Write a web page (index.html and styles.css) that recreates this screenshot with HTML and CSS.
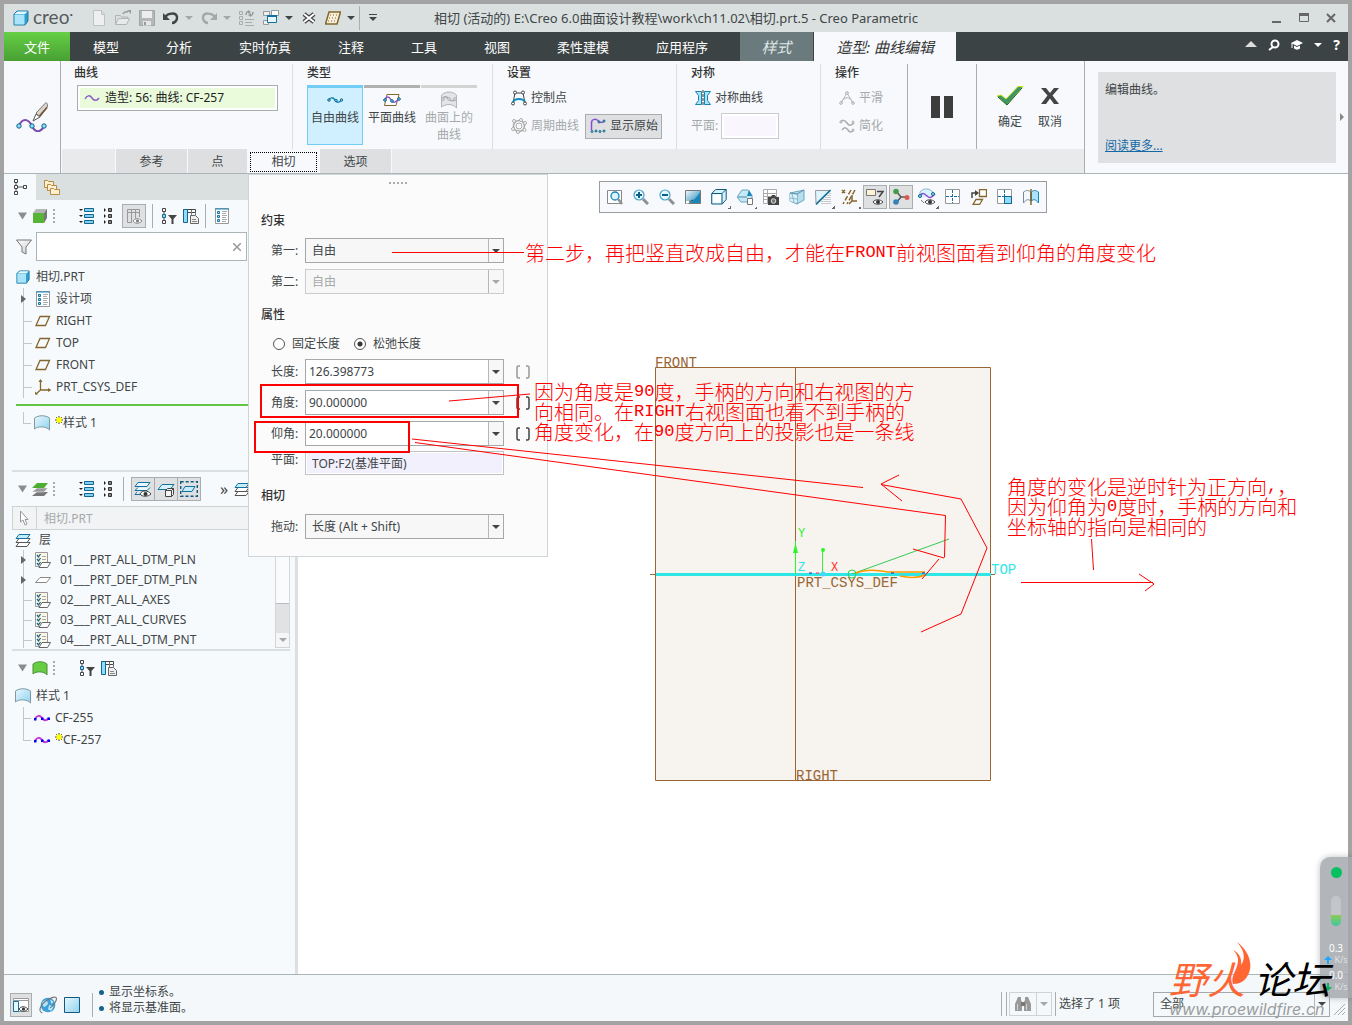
FILE: index.html
```html
<!DOCTYPE html>
<html lang="zh-CN">
<head>
    <meta charset="UTF-8">
    <meta name="viewport" content="width=device-width, initial-scale=1.0">
    <title>相切 (活动的) - Creo Parametric</title>
    <link rel="stylesheet" href="styles.css">
</head>
<body>
<!-- 图标库 -->
<svg class="defs" width="0" height="0">
    <defs>
        <linearGradient id="gBlue" x1="0" y1="0" x2="1" y2="1"><stop offset="0" stop-color="#e8f8fe"/><stop offset="1" stop-color="#8fd2f0"/></linearGradient>
        <linearGradient id="gGray" x1="0" y1="0" x2="1" y2="1"><stop offset="0" stop-color="#ffffff"/><stop offset="1" stop-color="#c9cccd"/></linearGradient>
        <linearGradient id="gDeep" x1="0" y1="0" x2="1" y2="1"><stop offset="0" stop-color="#f2fbff"/><stop offset="1" stop-color="#177fb2"/></linearGradient>
    </defs>
    <symbol id="cube" viewBox="0 0 16 16"><path d="M1 4l3-3h11v10l-3 4H1z" fill="#2a9fd0" stroke="#277a9b"/><path d="M1.500 4.500h10v10h-10z" fill="#a9e4fa"/><path d="M1.500 4l3-2.500h10L12 4z" fill="#e4f8ff"/></symbol>
    <symbol id="gcube" viewBox="0 0 16 16"><path d="M4 1h11l-3 4H1z" fill="#b5b5b5"/><path d="M12 5l3-4v9l-3 5z" fill="#777"/><path d="M1 5h11v10H1z" fill="#56b536"/></symbol>
    <symbol id="new" viewBox="0 0 16 16"><path d="M2.500 .5h8l3 4v11h-11z" fill="#eeefef" stroke="#bfc2c2"/><path d="M10.500 .5v4h3" fill="none" stroke="#bfc2c2"/></symbol>
    <symbol id="open" viewBox="0 0 16 16"><path d="M.5 14.500V5.500h5l1 1.500h6v2" fill="#dcdedd" stroke="#b0b4b4"/><path d="M.5 14.500l3-6h11l-3 6z" fill="#e8eaea" stroke="#b0b4b4"/><path d="M8 4c1-2.500 3-2.500 5-2" fill="none" stroke="#999" stroke-width="1.500"/><path d="M12 0h4v4z" fill="#999"/></symbol>
    <symbol id="save" viewBox="0 0 16 16"><path d="M.5 .5h15v15h-15z" fill="#b5b8b8" stroke="#a1a4a4"/><path d="M3 1h10v7H3z" fill="#eceeee"/><path d="M4 11h8v4.500H4z" fill="#e5e7e7"/><path d="M5 12h2v3H5z" fill="#999"/></symbol>
    <symbol id="undo" viewBox="0 0 16 16"><path d="M2 7c3-4 11-5 12 0 .5 4-3 6-5 6" fill="none" stroke="currentColor" stroke-width="2.500"/><path d="M0 3v7h7z" fill="currentColor"/></symbol>
    <symbol id="redo" viewBox="0 0 16 16"><path d="M14 7c-3-4-11-5-12 0-.5 4 3 6 5 6" fill="none" stroke="currentColor" stroke-width="2.500"/><path d="M16 3v7H9z" fill="currentColor"/></symbol>
    <symbol id="regen" viewBox="0 0 16 16"><path d="M.5 1.500h3v3h-3zM.5 6.500h3v3h-3zM.5 11.500h3v3h-3z" fill="none" stroke="#a9adad"/><path d="M6 9.500h9M6 12.500h7M6 15.500h9" stroke="#a9adad"/><path d="M7 5c0-3 2-4 3-3M14 2c0 3-2 4-3 3" fill="none" stroke="#999" stroke-width="1.500"/><path d="M9 0l3 2-3 2zM12 3l-3 2 3 2z" fill="#999"/></symbol>
    <symbol id="wins" viewBox="0 0 16 16"><path d="M.5 1.500h6v4h-6zM.5 10.500h5v4h-5z" fill="#eee" stroke="#999"/><path d="M8.500 .5h7v5h-7z" fill="#fff" stroke="#999"/><path d="M4.500 5.500h9v7h-9z" fill="#e6f6fd" stroke="#13719b"/><path d="M4 5h10v2H4z" fill="#13719b"/></symbol>
    <symbol id="closewin" viewBox="0 0 16 16"><path d="M3 4l10 8M13 4L3 12" stroke="#444" stroke-width="4.500"/><path d="M3 4l10 8M13 4L3 12" stroke="#fff" stroke-width="2"/></symbol>
    <symbol id="planeD" viewBox="0 0 16 16"><path d="M4 2h11.500L12 14H.5z" fill="#f8efda" stroke="#85662c" stroke-width="1.500"/><path d="M5 5h8M4 8h8M3 11h8" stroke="#85662c" stroke-dasharray="1 2"/></symbol>
    <symbol id="caret" viewBox="0 0 8 8"><path d="M0 2h8L4 6z" fill="currentColor"/></symbol>
    <symbol id="caretTop" viewBox="0 0 10 8"><path d="M1 0h8v1H1zM1 3h8L5 7z" fill="currentColor"/></symbol>
    <symbol id="tri" viewBox="0 0 10 8"><path d="M0 0h10L5 8z" fill="#8c8c8c"/></symbol>
    <symbol id="wave" viewBox="0 0 16 16"><path d="M1 9c2-4 5-4 7-1s5 3 7 0" fill="none" stroke="#8a5cc4" stroke-width="1.500"/></symbol>
    <symbol id="waveDots" viewBox="0 0 16 16"><path d="M1 9c2-4 5-4 7-1s4 3 7 0" fill="none" stroke="#1787b8" stroke-width="1.500"/><g fill="#8fe0ff" stroke="#0d5f86"><circle cx="2" cy="8" r="1.200"/><circle cx="9" cy="8.500" r="1.200"/><circle cx="14.500" cy="8" r="1.200"/></g></symbol>
    <symbol id="planeWave" viewBox="0 0 18 16"><path d="M4 2.500h12l-3 11H1.500z" fill="#fff" stroke="#85662c"/><path d="M1 9c2-5 5-5 7-1s5 2 8-1" fill="none" stroke="#8a4fd0" stroke-width="1.500"/><g fill="#8fe0ff" stroke="#0d5f86"><circle cx="2" cy="8" r="1.300"/><circle cx="9" cy="9" r="1.300"/><circle cx="16" cy="7" r="1.300"/></g></symbol>
    <symbol id="surfWave" viewBox="0 0 18 18"><path d="M1.500 4c4-4 11-4 15 0v13c-4-5-11-4-15-1z" fill="#e3e4e5" stroke="#b5b6b8"/><path d="M2 8c3-4 5-2 7 0s4 3 7 0" fill="none" stroke="#a7a8aa" stroke-width="1.500"/><g fill="#fff" stroke="#a7a8aa"><circle cx="3" cy="8" r="1.300"/><circle cx="9" cy="8" r="1.300"/><circle cx="15" cy="8" r="1.300"/></g></symbol>
    <symbol id="bigCurve" viewBox="0 0 32 32"><path d="M3 26c3-8 9-8 13 0s9 6 12 0" fill="none" stroke="#7a4bb0" stroke-width="2"/><g fill="#8fe0ff" stroke="#0d5f86"><circle cx="3" cy="26" r="2.200"/><circle cx="16" cy="26" r="2.200"/><circle cx="28" cy="26" r="2.200"/></g><path d="M17 21l3-7 4 3z" fill="#fff" stroke="#555"/><path d="M20 13L30 2.500c1.500 1 2 3 1 5L24 17z" fill="#d8d3cc" stroke="#777"/><path d="M23.500 16l7.500-8.500" stroke="#744a25" stroke-width="1.500"/></symbol>
    <symbol id="ctrl" viewBox="0 0 16 16"><path d="M2 13L4 3h8l2 10" fill="none" stroke="#444"/><path d="M2 12c2-4 10-4 12 0" fill="none" stroke="#1489bd" stroke-width="2"/><g fill="#fff" stroke="#444"><circle cx="4" cy="2.500" r="1.500"/><circle cx="12" cy="2.500" r="1.500"/><circle cx="2" cy="13.500" r="1.500"/><circle cx="14" cy="13.500" r="1.500"/></g></symbol>
    <symbol id="period" viewBox="0 0 16 16"><circle cx="8" cy="8" r="5.500" fill="none" stroke="#aaa" stroke-width="1.500"/><circle cx="8" cy="8" r="3" fill="none" stroke="#aaa"/><g fill="#fff" stroke="#aaa"><circle cx="3" cy="3" r="1.500"/><circle cx="10" cy="2" r="1.500"/><circle cx="14" cy="5" r="1.500"/><circle cx="13.500" cy="12" r="1.500"/><circle cx="7" cy="14" r="1.500"/><circle cx="2" cy="11" r="1.500"/></g></symbol>
    <symbol id="showOrig" viewBox="0 0 16 16"><path d="M1.500 12V5c0-5 5-4 7-2s4 2 6 0" fill="none" stroke="#8a4fd0" stroke-width="1.500"/><g fill="#8fe0ff" stroke="#0d5f86"><circle cx="2" cy="13.500" r="1"/><circle cx="6" cy="13" r="1"/><circle cx="10" cy="13.500" r="1"/><circle cx="14" cy="13" r="1"/><circle cx="9" cy="4" r="1"/><circle cx="14" cy="3" r="1"/></g></symbol>
    <symbol id="sym" viewBox="0 0 16 16"><path d="M.5 1.500h6v13h-6l3-4v-5zM15.500 1.500h-6v13h6l-3-4v-5z" fill="#a9e4fa" stroke="#1c83b0"/><path d="M8 0v16" stroke="#333" stroke-dasharray="3 1"/></symbol>
    <symbol id="smooth" viewBox="0 0 16 16"><path d="M2 13L8 3l6 10M2 13c3-7 9-7 12 0" fill="none" stroke="#b5b5b5"/><g fill="#fff" stroke="#aaa"><circle cx="8" cy="3" r="1.300"/><circle cx="2" cy="13" r="1.300"/><circle cx="14" cy="13" r="1.300"/></g></symbol>
    <symbol id="simp" viewBox="0 0 16 16"><path d="M1 5c2-4 5-3 7 0s4 3 7 0M3 12c2-3 4-3 6 0s4 2 6 0" fill="none" stroke="#aaa" stroke-width="1.500"/><g fill="#fff" stroke="#aaa"><circle cx="2" cy="4" r="1"/><circle cx="14" cy="4" r="1"/><circle cx="14" cy="12" r="1"/></g></symbol>
    <symbol id="ok" viewBox="0 0 28 20"><path d="M1 10l4-1 5 4L22 .5h5L11 19z" fill="#3e9566" stroke="#c6e514"/><path d="M2 11l9 8L26 2" fill="none" stroke="#21603a"/></symbol>
    <symbol id="cancel" viewBox="0 0 20 16"><path d="M1 0h5l4 5 4-5h5l-6.500 7.500L19 16h-5l-4-5.500L6 16H1l6.500-8.500z" fill="#444"/></symbol>
    <symbol id="cap" viewBox="0 0 12 10"><path d="M0 3l6-3 6 3-6 3z" fill="#fff"/><path d="M3 5.500v3c1.500 1.500 4.500 1.500 6 0v-3L6 7z" fill="#fff"/><path d="M1 3v5" stroke="#fff"/></symbol>
    <symbol id="treeIco" viewBox="0 0 16 16"><path d="M4 4v8M5 8h6" stroke="#555"/><g fill="#fff" stroke="#444"><path d="M2.500 .5h3v3h-3zM2.500 6.500h3v3h-3zM2.500 12.500h3v3h-3zM11.500 6.500h3v3h-3z"/></g></symbol>
    <symbol id="folders" viewBox="0 0 16 16"><g fill="#fdf0cf" stroke="#b88a44"><path d="M.5 1.500h3l1 1h5v6h-9z"/><path d="M3.500 5.500h3l1 1h5v5h-9z"/><path d="M6.500 9.500h3l1 1h5v5h-9z"/></g></symbol>
    <symbol id="listBlue" viewBox="0 0 16 16"><path d="M5.500 .5h9v3h-9zM5.500 6.500h9v3h-9zM5.500 12.500h9v3h-9z" fill="#7fd0f4" stroke="#13658c"/><path d="M0 1h4L2 3zM0 7h4L2 9zM0 13h4l-2 2z" fill="#222"/></symbol>
    <symbol id="listGray" viewBox="0 0 16 16"><path d="M7.500 .5h3v3h-3zM7.500 6.500h3v3h-3zM7.500 12.500h3v3h-3z" fill="#888" stroke="#333"/><path d="M3 0l2 2-2 2zM3 6l2 2-2 2zM3 12l2 2-2 2z" fill="#222"/></symbol>
    <symbol id="tableEye" viewBox="0 0 16 16"><path d="M1.500 1.500h12v3h-12zM1.500 4.500v10h4v-10M9.500 1.500v9M13.500 4v5M5.500 1.500v3" fill="none" stroke="#999"/><path d="M7 13c2-3 6-3 9 0-3 3-7 3-9 0z" fill="#fff" stroke="#888"/><circle cx="11.500" cy="13" r="1.500" fill="#777"/></symbol>
    <symbol id="treeFilter" viewBox="0 0 16 16"><path d="M3 3v10" stroke="#444"/><path d="M1.500 .5h3v3h-3zM1.500 12.500h3v3h-3z" fill="#fff" stroke="#444"/><path d="M1.500 6.500h3v3h-3z" fill="#8fdcff" stroke="#13658c"/><path d="M7 7h9l-3.500 4v5h-2v-5z" fill="#444"/></symbol>
    <symbol id="tableDoc" viewBox="0 0 16 16"><path d="M.5 1.500h12v3H.5z" fill="#fff" stroke="#444"/><path d="M.5 1.500h4v13h-4z" fill="#8fdcff" stroke="#13658c"/><path d="M8.500 2v6M12.500 4v3" stroke="#777"/><path d="M7.500 7.500h5l3 3v5h-8z" fill="#eee" stroke="#666"/><path d="M9 11.500h4M9 13.500h5" stroke="#888"/></symbol>
    <symbol id="docList" viewBox="0 0 16 16"><path d="M1.500 .5h13v15h-13z" fill="#fff" stroke="#999"/><path d="M1 1h14" stroke="#1489bd"/><path d="M3.500 3.500h2v2h-2zM3.500 7.500h2v2h-2zM3.500 11.500h2v2h-2z" fill="#8fdcff" stroke="#1677a0"/><path d="M8 3.500h5M8 5.500h4M8 7.500h5M8 9.500h4M8 11.500h5M8 13.500h4" stroke="#aaa"/></symbol>
    <symbol id="funnel" viewBox="0 0 16 16"><path d="M.5 1h15L10 8v7l-4-2V8z" fill="url(#gGray)" stroke="#777"/></symbol>
    <symbol id="plane" viewBox="0 0 16 16"><path d="M5 3.500h9.500l-4 9H1z" fill="none" stroke="#85662c" stroke-width="1.300"/></symbol>
    <symbol id="planeW" viewBox="0 0 16 16"><path d="M5 5.500h10.500l-4 5H.5z" fill="#fff" stroke="#888"/></symbol>
    <symbol id="csys" viewBox="0 0 16 16"><path d="M5.500 1v10h10M5.500 11L1 15" fill="none" stroke="#85662c" stroke-width="1.300"/><path d="M3.500 3L5.500 0l2 3M13 9l3 2-3 2M0 12.500v3h3" fill="#85662c"/></symbol>
    <symbol id="surf" viewBox="0 0 16 16"><path d="M.5 3c4-3 11-3 15 0v12c-3-4-12-4-15-1z" fill="url(#gBlue)" stroke="#7f99a5"/></symbol>
    <symbol id="surfG" viewBox="0 0 16 16"><path d="M1 4c4-3 10-3 14 0v11c-3-4-11-4-14-1z" fill="#66cc42" stroke="#4c8f35"/></symbol>
    <symbol id="star" viewBox="0 0 8 8"><path d="M4 0v8M0 4h8M1 1l6 6M7 1L1 7" stroke="#444"/><path d="M1.500 1.500h5v5h-5z" fill="#ff0"/></symbol>
    <symbol id="layersG" viewBox="0 0 16 16"><path d="M5 11h11l-4 4H0z" fill="#777"/><path d="M5 7h11l-4 4H0z" fill="#999" stroke="#fff" stroke-width=".5"/><path d="M5 2h11l-4 5H0z" fill="#4eae31"/></symbol>
    <symbol id="layers" viewBox="0 0 16 16"><path d="M4 10.500h11l-3 4H1z" fill="#fff" stroke="#555"/><path d="M4 6.500h11l-3 4H1z" fill="#fff" stroke="#555"/><path d="M4 2.500h11l-3 4H1z" fill="#c5ecfb" stroke="#13719b"/></symbol>
    <symbol id="layersEye" viewBox="0 0 18 16"><path d="M4 1.500h12l-3 4H1zM4 6.500L1 9.500h12l3-3M3 11l-2 2.500h5" fill="#e8f8fe" stroke="#13719b"/><path d="M6 13c2-4 8-4 11 0-3 3-9 3-11 0z" fill="#fff" stroke="#444"/><circle cx="11.500" cy="13" r="2" fill="#333"/></symbol>
    <symbol id="layerBox" viewBox="0 0 18 16"><path d="M5 3.500h12l-4 5H1z" fill="#d4f1fc" stroke="#13719b"/><path d="M8.500 9.500l2-2h6v6l-2 2h-6zM8.500 9.500h6v6M14.500 9.500l2-2" fill="#f4f4f4" stroke="#444"/></symbol>
    <symbol id="layerSel" viewBox="0 0 18 16"><path d="M.7 .7h16.600v14.600H.7z" fill="none" stroke="#13597c" stroke-width="1.400" stroke-dasharray="3 2"/><path d="M5 5.500h10l-3 5H2z" fill="#c5ecfb" stroke="#13719b"/></symbol>
    <symbol id="pointer" viewBox="0 0 16 16"><path d="M4.500 1v11l2.500-2 2 5 2-1-2-4.500h3z" fill="#fff" stroke="#999"/></symbol>
    <symbol id="layerItem" viewBox="0 0 16 16"><path d="M.5 .5h12v14H.5z" fill="#fdf8e4" stroke="#999"/><path d="M2 3l1.500 2 2-3M2 7l1.500 2 2-3M2 11l1.500 2 2-3" fill="none" stroke="#13658c" stroke-width="1.300"/><path d="M7 4.500h4M7 7.500h4" stroke="#aaa"/><path d="M7 10.500h8.500l-3 5H4z" fill="#fff" stroke="#666"/></symbol>
    <symbol id="cf" viewBox="0 0 16 16"><path d="M1 9c2-4 5-4 7-1s4 3 7 0" fill="none" stroke="#c33ad6" stroke-width="2"/><path d="M0 8h2.500v2.500H0zM7 7.500h2.500V10H7zM13.500 7.500H16V10h-2.500z" fill="#00f"/></symbol>
    <symbol id="zoomFit" viewBox="0 0 16 16"><path d="M.5 1.500h14v13H.5z" fill="#fff" stroke="#888"/><circle cx="8" cy="7" r="4" fill="#d9f4ff" stroke="#1c83b0" stroke-width="1.300"/><path d="M11 10l4 5" stroke="#8c9194" stroke-width="2.500"/></symbol>
    <symbol id="zoomIn" viewBox="0 0 16 16"><circle cx="6" cy="6" r="5" fill="#e6f8ff" stroke="#4ba3c9" stroke-width="1.200"/><path d="M10 10l5 5" stroke="#8c9194" stroke-width="3"/><path d="M3 6h6M6 3v6" stroke="#0b5f88" stroke-width="2"/></symbol>
    <symbol id="zoomOut" viewBox="0 0 16 16"><circle cx="6" cy="6" r="5" fill="#e6f8ff" stroke="#4ba3c9" stroke-width="1.200"/><path d="M10 10l5 5" stroke="#8c9194" stroke-width="3"/><path d="M3 6h6" stroke="#0b5f88" stroke-width="2"/></symbol>
    <symbol id="repaint" viewBox="0 0 16 16"><path d="M.5 1.500h15v13H.5z" fill="url(#gDeep)" stroke="#777"/><path d="M1 14C7 13 12 9 15 3v11z" fill="#1787b8"/><path d="M1 12h6l-4 2.500H1z" fill="#fff"/><path d="M4 13l4-2" stroke="#444"/></symbol>
    <symbol id="box3" viewBox="0 0 16 16"><path d="M.7 4.500l4-4h10.500v10l-4 4.500H.7z" fill="#d4f1fc" stroke="#13597c"/><path d="M1 4.500h10V15M11 4.500l4-4" fill="none" stroke="#13597c"/><path d="M2 5.500h8v8H2z" fill="#fff"/></symbol>
    <symbol id="views" viewBox="0 0 16 16"><path d="M0 8l5-7h6l4 5v7H4z" fill="#c5e9f8" stroke="#6ba4bd"/><path d="M1 8h9" stroke="#4a8aa5"/><path d="M12 1l3 6h-5z" fill="#1787b8"/><path d="M10.500 9.500h5v6h-5z" fill="#fff" stroke="#777"/></symbol>
    <symbol id="camera" viewBox="0 0 16 16"><path d="M.5 .5h13v14H.5zM4.500 1v13M1 4.500h13M1 7.500h12M1 10.500h12" fill="#fff" stroke="#aaa"/><path d="M5 8h3l1-2h3l1 2h3v8H5z" fill="#444"/><circle cx="10.500" cy="12" r="2.300" fill="#777" stroke="#ddd"/></symbol>
    <symbol id="persp" viewBox="0 0 16 16"><path d="M1 4l14-3v10L8 15 1 12z" fill="#b5def0" stroke="#6ba4bd"/><path d="M8 15V5l7-4M8 5L1 4" fill="none" stroke="#6193ab"/><path d="M1 5l7 1v8l-7-2z" fill="#d8f1fa"/><path d="M3 5l2 8M1 9l7 1" stroke="#89b8cc"/></symbol>
    <symbol id="section" viewBox="0 0 16 16"><path d="M.5 1.500h14L1 14.500z" fill="#dff5fe" stroke="#999"/><path d="M15.500 1L1 15.500" stroke="#13719b" stroke-width="1.600"/><path d="M13 6v9M11 8v7M9 10v5M7 12v3M15 4v11" stroke="#999" stroke-dasharray="1 1"/></symbol>
    <symbol id="datum" viewBox="0 0 16 16"><path d="M1 1l3 3M4 1L1 4M10 1L2 15M14 1L6 15" stroke="#85662c" stroke-width="1.500" stroke-dasharray="5 2"/><path d="M11 6v6h5M11 12l-3 3" fill="none" stroke="#85662c" stroke-width="1.500"/></symbol>
    <symbol id="annoEye" viewBox="0 0 18 18"><path d="M.5 1.500h9v6h-9z" fill="#fdf4d6" stroke="#777"/><path d="M11 3.500h6L13 9" fill="none" stroke="#444" stroke-width="1.500"/><path d="M7 14c2-3 7-3 10 0-3 3-8 3-10 0z" fill="#fff" stroke="#444"/><circle cx="12" cy="14" r="2" fill="#333"/></symbol>
    <symbol id="spin" viewBox="0 0 18 18"><path d="M4 3l5 6h5M9 9l-5 6" fill="none" stroke="#555" stroke-width="1.500"/><circle cx="4" cy="3.500" r="2.800" fill="#49994a"/><circle cx="15" cy="9.500" r="2.500" fill="#dc5a50"/><circle cx="4" cy="14" r="2.800" fill="#3383b8"/></symbol>
    <symbol id="surfEye" viewBox="0 0 18 18"><path d="M2 10V4c3-4 9-4 13 0v4" fill="#d9f4ff" stroke="#8cb5c6"/><path d="M1 9c3-5 5-4 8-1s5 1 8-2" fill="none" stroke="#8a4fd0" stroke-width="1.500"/><circle cx="2" cy="8" r="1.500" fill="#8fe0ff" stroke="#0d5f86"/><circle cx="15" cy="6" r="1.500" fill="#8fe0ff" stroke="#0d5f86"/><path d="M3 12l3 3" stroke="#777"/><path d="M7 14c2-3 7-3 10 0-3 3-8 3-10 0z" fill="#fff" stroke="#444"/><circle cx="12" cy="14" r="2" fill="#333"/></symbol>
    <symbol id="grid4" viewBox="0 0 16 16"><path d="M.5 .5h14v14H.5z" fill="#fff" stroke="#999"/><path d="M7.500 1v13M1 7.500h13" stroke="#13719b" stroke-dasharray="3 1"/></symbol>
    <symbol id="orient" viewBox="0 0 16 16"><path d="M8.500 .5h7v7h-7zM5 10.500h6.500l-3 5H2z" fill="#fff" stroke="#85662c" stroke-width="1.300"/><path d="M1 9V4h4" fill="none" stroke="#444" stroke-width="1.500"/><path d="M4 1l4 3-4 3z" fill="#444"/></symbol>
    <symbol id="gridSel" viewBox="0 0 16 16"><path d="M.5 .5h14v14H.5z" fill="#fff" stroke="#999"/><path d="M7.500 1v7M1 7.500h13" stroke="#13719b" stroke-dasharray="3 1"/><path d="M7.500 7.500h7v7h-7z" fill="#8fdcff" stroke="#13658c"/></symbol>
    <symbol id="mirror" viewBox="0 0 16 16"><path d="M.5 3c3-2 5-2 7 0v9c-2-2-4-2-7 2z" fill="#f3f9fb" stroke="#789"/><path d="M15.500 3c-3-2-5-2-7 0v9c2-2 4-2 7 2z" fill="#a9e4fa" stroke="#1c83b0"/><path d="M8 0v16" stroke="#85662c" stroke-width="1.500"/></symbol>
    <symbol id="navEye" viewBox="0 0 16 16"><path d="M.5 1.500h15v13H.5z" fill="#fff" stroke="#999"/><path d="M1 3.500h14" stroke="#999"/><path d="M.5 4.500h5v10h-5z" fill="#e4f8ff" stroke="#13719b"/><path d="M6 12c2-3 6-3 9 0-3 3-7 3-9 0z" fill="#fff" stroke="#444"/><circle cx="10.500" cy="12" r="1.600" fill="#333"/></symbol>
    <symbol id="globe" viewBox="0 0 16 16"><circle cx="8" cy="8" r="6.500" fill="#3d9fd6"/><path d="M3 5l4-2 1 4-3 3-2-2zM9 8l4 1-2 4-3-1zM10 3l3 2-2 2z" fill="#b8e6f9"/><path d="M3 15C-1 14 1 8 6 4.500S15 0 15.500 2 13 8 10 10.500" fill="none" stroke="#777"/></symbol>
    <symbol id="page" viewBox="0 0 16 16"><path d="M.5 .5h15v15H.5z" fill="url(#gBlue)" stroke="#13597c"/></symbol>
    <symbol id="binoc" viewBox="0 0 18 16"><path d="M4 1h3v3l1 2v9H1V8zM14 1h-3v3l-1 2v9h7V8z" fill="#999"/><path d="M7 6h4v4H7z" fill="#777"/><path d="M3.500 8v6M12.500 8v6" stroke="#d5d5d5"/></symbol>
    <symbol id="brk" viewBox="0 0 14 14"><path d="M4 1H2.500Q1 1 1 3v8q0 2 1.500 2H4M10 1h1.500Q13 1 13 3v8q0 2-1.500 2H10" fill="none" stroke="currentColor" stroke-width="1.500"/></symbol>
</svg>

<div class="window">
    <header class="titlebar">
        <div class="quick">
            <svg class="i16"><use href="#cube"/></svg><span class="brand">creo<sup>•</sup></span>
            <button class="tool" aria-label="新建"><svg class="i16"><use href="#new"/></svg></button>
            <button class="tool" aria-label="打开"><svg class="i16"><use href="#open"/></svg></button>
            <button class="tool" aria-label="保存"><svg class="i16"><use href="#save"/></svg></button>
            <button class="tool" aria-label="撤消"><svg class="i16"><use href="#undo"/></svg><svg class="i8 dim"><use href="#caret"/></svg></button>
            <button class="tool dim" aria-label="重做"><svg class="i16"><use href="#redo"/></svg><svg class="i8"><use href="#caret"/></svg></button>
            <button class="tool" aria-label="重新生成"><svg class="i16"><use href="#regen"/></svg></button>
            <button class="tool" aria-label="窗口"><svg class="i16"><use href="#wins"/></svg><svg class="i8"><use href="#caret"/></svg></button>
            <button class="tool" aria-label="关闭"><svg class="i16"><use href="#closewin"/></svg></button>
            <button class="tool" aria-label="基准"><svg class="i16"><use href="#planeD"/></svg><svg class="i8"><use href="#caret"/></svg></button>
            <i class="vsep"></i>
            <button class="tool" aria-label="自定义"><svg class="i10"><use href="#caretTop"/></svg></button>
        </div>
        <div class="title">相切 (活动的) E:\Creo 6.0曲面设计教程\work\ch11.02\相切.prt.5 - Creo Parametric</div>
        <div class="winbtns">
            <button aria-label="最小化"><svg width="10" height="10"><path d="M0 8h9v2H0z" fill="#666"/></svg></button>
            <button aria-label="最大化"><svg width="10" height="10"><path d="M.5 .5h9v8h-9z" fill="none" stroke="#666"/><path d="M0 0h10v3H0z" fill="#666"/></svg></button>
            <button aria-label="关闭窗口"><svg width="10" height="10"><path d="M1 1l8 8M9 1L1 9" stroke="#666" stroke-width="2"/></svg></button>
        </div>
    </header>

    <nav class="tabs">
        <button class="file">文件</button>
        <button>模型</button><button>分析</button><button>实时仿真</button><button>注释</button><button>工具</button><button>视图</button><button>柔性建模</button><button>应用程序</button>
        <button class="style-tab">样式</button>
        <button class="current">造型: 曲线编辑</button>
        <div class="tab-tools">
            <svg width="12" height="10"><path d="M0 7l6-6 6 6z" fill="#ddd"/></svg>
            <svg width="12" height="12"><circle cx="7" cy="5" r="3.500" fill="none" stroke="#fff" stroke-width="2"/><path d="M5 8l-4 3" stroke="#fff" stroke-width="2"/></svg>
            <svg width="12" height="10"><use href="#cap"/></svg>
            <svg class="i8"><use href="#caret"/></svg>
            <b>?</b>
        </div>
    </nav>

    <section class="ribbon">
        <div class="feature"><svg width="32" height="32"><use href="#bigCurve"/></svg></div>
        <div class="ribbon-body">
            <div class="groups">
                <div class="group g-curve">
                    <h3>曲线</h3>
                    <div class="collector"><svg class="i16"><use href="#wave"/></svg>造型: 56: 曲线: CF-257</div>
                </div>
                <div class="group g-type">
                    <h3>类型</h3>
                    <div class="types">
                        <button class="on"><svg width="16" height="18"><use href="#waveDots"/></svg>自由曲线</button>
                        <button><svg width="18" height="18"><use href="#planeWave"/></svg>平面曲线</button>
                        <button disabled><svg width="18" height="18"><use href="#surfWave"/></svg>曲面上的曲线</button>
                    </div>
                </div>
                <div class="group g-set">
                    <h3>设置</h3>
                    <div class="line"><button class="cmd"><svg class="i16"><use href="#ctrl"/></svg>控制点</button></div>
                    <div class="line"><button class="cmd" disabled><svg class="i16"><use href="#period"/></svg>周期曲线</button><button class="cmd pressed"><svg class="i16"><use href="#showOrig"/></svg>显示原始</button></div>
                </div>
                <div class="group g-sym">
                    <h3>对称</h3>
                    <div class="line"><button class="cmd"><svg class="i16"><use href="#sym"/></svg>对称曲线</button></div>
                    <div class="line"><label for="symPlane" class="off">平面:</label><input id="symPlane" type="text" disabled></div>
                </div>
                <div class="group g-op">
                    <h3>操作</h3>
                    <div class="line"><button class="cmd" disabled><svg class="i16"><use href="#smooth"/></svg>平滑</button></div>
                    <div class="line"><button class="cmd" disabled><svg class="i16"><use href="#simp"/></svg>简化</button></div>
                </div>
                <div class="pause"><button aria-label="暂停"><svg width="24" height="22"><path d="M1 0h9v22H1zM14 0h9v22h-9z" fill="#3d3d3d"/></svg></button></div>
                <div class="confirm">
                    <button><svg width="28" height="20"><use href="#ok"/></svg>确定</button>
                    <button><svg width="20" height="20"><use href="#cancel"/></svg>取消</button>
                </div>
            </div>
            <div class="subtabs">
                <span class="blank"></span><button>参考</button><button class="narrow">点</button><button class="active"><span>相切</span></button><button>选项</button><span class="rest"></span>
            </div>
        </div>
        <aside class="help">
            <div class="helpbox"><p>编辑曲线。</p><a href="#more">阅读更多...</a></div>
            <svg width="6" height="8"><path d="M1 0l4 4-4 4z" fill="#888"/></svg>
        </aside>
    </section>

    <main class="work">
        <aside class="side">
            <div class="side-tabs">
                <button class="on" aria-label="模型树"><svg class="i16"><use href="#treeIco"/></svg></button>
                <button aria-label="文件夹"><svg class="i16"><use href="#folders"/></svg></button>
            </div>
            <div class="tree-panel">
                <div class="bar">
                    <svg class="tri"><use href="#tri"/></svg><svg class="i16"><use href="#gcube"/></svg><i class="dots"></i>
                    <div class="bar-tools">
                        <button aria-label="展开"><svg class="i16"><use href="#listBlue"/></svg></button>
                        <button aria-label="收缩"><svg class="i16"><use href="#listGray"/></svg></button>
                        <button class="pressed" aria-label="显示列"><svg class="i16"><use href="#tableEye"/></svg></button>
                        <i class="vsep"></i>
                        <button aria-label="过滤器"><svg class="i16"><use href="#treeFilter"/></svg></button>
                        <button aria-label="树列"><svg class="i16"><use href="#tableDoc"/></svg></button>
                        <i class="vsep"></i>
                        <button aria-label="设计项"><svg class="i16"><use href="#docList"/></svg></button>
                    </div>
                </div>
                <div class="search"><svg class="i16"><use href="#funnel"/></svg><div class="field"><input type="text" aria-label="搜索"><button aria-label="清除"><svg width="8" height="8"><path d="M0 0l8 8M8 0L0 8" stroke="#999" stroke-width="1.500"/></svg></button></div></div>
                <div class="root"><svg class="i14"><use href="#cube"/></svg>相切.PRT</div>
                <ul class="tree">
                    <li class="exp"><svg class="i16"><use href="#docList"/></svg>设计项</li>
                    <li><svg class="i16"><use href="#plane"/></svg>RIGHT</li>
                    <li><svg class="i16"><use href="#plane"/></svg>TOP</li>
                    <li><svg class="i16"><use href="#plane"/></svg>FRONT</li>
                    <li><svg class="i16"><use href="#csys"/></svg>PRT_CSYS_DEF</li>
                </ul>
                <div class="insert"></div>
                <ul class="tree end">
                    <li><svg class="i16"><use href="#surf"/></svg><span><svg class="i8 star"><use href="#star"/></svg>样式 1</span></li>
                </ul>
            </div>
            <div class="layer-panel">
                <div class="bar">
                    <svg class="tri"><use href="#tri"/></svg><svg class="i16"><use href="#layersG"/></svg><i class="dots"></i>
                    <div class="bar-tools layer-tools">
                        <button aria-label="展开层"><svg class="i16"><use href="#listBlue"/></svg></button>
                        <button aria-label="收缩层"><svg class="i16"><use href="#listGray"/></svg></button>
                        <i class="vsep"></i>
                        <button class="pressed" aria-label="显示层"><svg class="i18"><use href="#layersEye"/></svg></button>
                        <button class="pressed" aria-label="层项"><svg class="i18"><use href="#layerBox"/></svg></button>
                        <button class="pressed" aria-label="选择层"><svg class="i18"><use href="#layerSel"/></svg></button>
                        <span class="more">»</span><svg class="i16"><use href="#layers"/></svg>
                    </div>
                </div>
                <div class="target"><svg class="i16"><use href="#pointer"/></svg><input type="text" value="相切.PRT" aria-label="活动对象" disabled></div>
                <div class="layer-box">
                    <div class="layer-list">
                        <div class="root"><svg class="i16"><use href="#layers"/></svg>层</div>
                        <ul class="tree">
                            <li class="exp"><svg class="i16"><use href="#layerItem"/></svg>01___PRT_ALL_DTM_PLN</li>
                            <li class="exp"><svg class="i16"><use href="#planeW"/></svg>01___PRT_DEF_DTM_PLN</li>
                            <li><svg class="i16"><use href="#layerItem"/></svg>02___PRT_ALL_AXES</li>
                            <li><svg class="i16"><use href="#layerItem"/></svg>03___PRT_ALL_CURVES</li>
                            <li><svg class="i16"><use href="#layerItem"/></svg>04___PRT_ALL_DTM_PNT</li>
                        </ul>
                    </div>
                    <div class="scroll"><i class="thumb"></i><button class="dim" aria-label="向下滚动"><svg class="i8"><use href="#caret"/></svg></button></div>
                </div>
            </div>
            <div class="style-panel">
                <div class="bar">
                    <svg class="tri"><use href="#tri"/></svg><svg class="i16"><use href="#surfG"/></svg><i class="dots"></i>
                    <div class="bar-tools">
                        <button aria-label="样式过滤器"><svg class="i16"><use href="#treeFilter"/></svg></button>
                        <button aria-label="样式列"><svg class="i16"><use href="#tableDoc"/></svg></button>
                    </div>
                </div>
                <div class="root"><svg class="i16"><use href="#surf"/></svg>样式 1</div>
                <ul class="tree end">
                    <li><svg class="i16"><use href="#cf"/></svg>CF-255</li>
                    <li><svg class="i16"><use href="#cf"/></svg><span><svg class="i8 star"><use href="#star"/></svg>CF-257</span></li>
                </ul>
            </div>
        </aside>

        <section class="view">
            <!-- 模型视图 -->
            <svg class="scene">
                <g transform="translate(-298 -174)">
                    <text x="655" y="367" class="datum">FRONT</text>
                    <path d="M655.500 367.500h335v413h-335z" fill="#f7f3ee" stroke="#996633"/>
                    <path d="M795.500 367v413M650 574.500h345" stroke="#996633"/>
                    <text x="796" y="780" class="datum">RIGHT</text>
                    <text x="797" y="587" class="datum">PRT_CSYS_DEF</text>
                    <path d="M656 574.500h335" stroke="#2ee6e6" stroke-width="3"/>
                    <text x="991" y="574" class="datum cyan">TOP</text>
                    <path d="M795.500 574v-33M822.500 573v-23" stroke="#2df52d"/>
                    <path d="M793 553l2.500-10 2.500 10z" fill="#2df52d"/>
                    <circle cx="823" cy="550" r="2" fill="#2df52d"/><circle cx="823" cy="574" r="2.500" fill="#46d6ff"/>
                    <text x="798" y="537" class="axis green">Y</text>
                    <text x="798" y="571" class="axis cyan">Z</text>
                    <text x="831" y="571" class="axis red">X</text>
                    <circle cx="852" cy="574" r="4" fill="none" stroke="#33cc55"/>
                    <path d="M852 574l97-35" stroke="#33cc55"/>
                    <path d="M856 573c10-4 22-3 32-1h37M900 576c9 2 18 2 25-1" fill="none" stroke="#ff9900" stroke-width="1.500"/>
                    <path d="M809 573h3M891 573h3M922 573h3" stroke="#2222cc" stroke-width="1"/>
                    <path d="M816 573h3" stroke="#f33" stroke-width="1"/>
                </g>
            </svg>
            <div class="viewbar">
                <button aria-label="重新调整"><svg class="i16"><use href="#zoomFit"/></svg></button>
                <button aria-label="放大"><svg class="i16"><use href="#zoomIn"/></svg></button>
                <button aria-label="缩小"><svg class="i16"><use href="#zoomOut"/></svg></button>
                <button aria-label="重画"><svg class="i16"><use href="#repaint"/></svg></button>
                <button class="drop" aria-label="显示样式"><svg class="i16"><use href="#box3"/></svg></button>
                <button class="drop" aria-label="已保存方向"><svg class="i16"><use href="#views"/></svg></button>
                <button aria-label="视图管理器"><svg class="i16"><use href="#camera"/></svg></button>
                <button aria-label="透视图"><svg class="i16"><use href="#persp"/></svg></button>
                <button class="drop" aria-label="截面"><svg class="i16"><use href="#section"/></svg></button>
                <button class="drop" aria-label="基准显示"><svg class="i16"><use href="#datum"/></svg></button>
                <button class="pressed" aria-label="注释显示"><svg class="i18"><use href="#annoEye"/></svg></button>
                <button class="pressed" aria-label="旋转中心"><svg class="i18"><use href="#spin"/></svg></button>
                <button class="drop" aria-label="样式显示"><svg class="i18"><use href="#surfEye"/></svg></button>
                <button aria-label="全部视图"><svg class="i16"><use href="#grid4"/></svg></button>
                <button aria-label="活动平面方向"><svg class="i16"><use href="#orient"/></svg></button>
                <button aria-label="下一视图"><svg class="i16"><use href="#gridSel"/></svg></button>
                <button aria-label="镜像"><svg class="i16"><use href="#mirror"/></svg></button>
            </div>
        </section>

        <form class="panel">
            <div class="grip"></div>
            <h4>约束</h4>
            <div class="row"><label for="first">第一:</label><div class="combo"><select id="first"><option>自由</option></select><i><svg class="i8"><use href="#caret"/></svg></i></div></div>
            <div class="row"><label for="second">第二:</label><div class="combo off"><select id="second" disabled><option>自由</option></select><i><svg class="i8"><use href="#caret"/></svg></i></div></div>
            <h4>属性</h4>
            <div class="radios">
                <label><input type="radio" name="len">固定长度</label>
                <label><input type="radio" name="len" checked>松弛长度</label>
            </div>
            <div class="row"><label for="length">长度:</label><div class="combo"><input id="length" type="text" value="126.398773"><i><svg class="i8"><use href="#caret"/></svg></i></div><svg class="brk light"><use href="#brk"/></svg></div>
            <div class="row"><label for="angle">角度:</label><div class="combo"><input id="angle" type="text" value="90.000000"><i><svg class="i8"><use href="#caret"/></svg></i></div><svg class="brk"><use href="#brk"/></svg></div>
            <div class="row"><label for="elev">仰角:</label><div class="combo"><input id="elev" type="text" value="20.000000"><i><svg class="i8"><use href="#caret"/></svg></i></div><svg class="brk"><use href="#brk"/></svg></div>
            <div class="row plane-row"><label for="plane1">平面:</label><input id="plane1" class="plane-input" type="text" value="TOP:F2(基准平面)"></div>
            <h4>相切</h4>
            <div class="row"><label for="drag">拖动:</label><div class="combo"><select id="drag"><option>长度 (Alt + Shift)</option></select><i><svg class="i8"><use href="#caret"/></svg></i></div></div>
        </form>
    </main>

    <footer class="status">
        <div class="st-left">
            <button class="pressed" aria-label="导航器"><svg class="i16"><use href="#navEye"/></svg></button>
            <button aria-label="浏览器"><svg class="i18"><use href="#globe"/></svg></button>
            <button aria-label="全屏"><svg class="i16"><use href="#page"/></svg></button>
        </div>
        <ul class="msgs"><li>显示坐标系。</li><li>将显示基准面。</li></ul>
        <div class="st-right">
            <i class="vsep"></i>
            <div class="find"><button class="dim" aria-label="查找"><svg class="i18"><use href="#binoc"/></svg></button><button class="dim arrow" aria-label="查找选项"><svg class="i8"><use href="#caret"/></svg></button></div>
            <span class="sel-count">选择了 1 项</span>
            <div class="combo"><select aria-label="选择过滤器"><option>全部</option></select><i><svg class="i8"><use href="#caret"/></svg></i></div>
            <svg class="sizer" width="12" height="12"><path d="M1 12L12 1M5 12l7-7M9 12l3-3" stroke="#aaa"/></svg>
        </div>
    </footer>
</div>

<!-- 教程标注 -->
<svg class="marks">
    <path d="M261 385h257v32H261zM255 422h154v30H255z" fill="none" stroke="#f00" stroke-width="2"/>
    <g fill="none" stroke="#f00" stroke-width="1">
        <path d="M392 252.500h132M449 401l81-7M412 439l451 48.500M415 442.500l530.500 73-1 42M913 549l31 9M939 559l-17 20"/>
        <path d="M899 475l-18 9 21 17M881 484.500l80 14.500 26 49-26 66-40 18"/>
        <path d="M1091.500 539l2 31M1021 582.500h132M1139 574l15 10M1154 584l-9 7"/>
    </g>
</svg>
<p class="note n1">第二步，再把竖直改成自由，才能在<span>FRONT</span>前视图面看到仰角的角度变化</p>
<p class="note n2">因为角度是<span>90</span>度，手柄的方向和右视图的方<br>向相同。在<span>RIGHT</span>右视图面也看不到手柄的<br>角度变化，在<span>90</span>度方向上的投影也是一条线</p>
<p class="note n3">角度的变化是逆时针为正方向<span>,</span>，<br>因为仰角为<span>0</span>度时，手柄的方向和<br>坐标轴的指向是相同的</p>

<div class="netmon">
    <i class="led"></i>
    <i class="gauge"></i>
    <div class="speed">0.3<small><svg width="8" height="8"><path d="M4 0l4 4H5v4H3V4H0z" fill="#1aa7ff"/></svg>K/s</small></div>
    <div class="speed">0.0<small><svg width="8" height="8"><path d="M4 8L0 4h3V0h2v4h3z" fill="#07b55b"/></svg>K/s</small></div>
</div>
<div class="watermark">
    <div class="wm-name"><span>野火</span>论坛</div>
    <svg class="flame" width="22" height="44"><path d="M6 0c11 8 17 22 11 33-3 6-8 9-15 9C-1 34 7 28 7 18 7 14 5 11 2 8c6 3 9 8 8 15C15 16 13 8 6 0z" fill="#ff6633"/></svg>
    <div class="wm-url">www.proewildfire.cn</div>
</div>
</body>
</html>
```

FILE: styles.css
```css
* {
    box-sizing: border-box;
}
body {
    margin: 0;
    background: #a3a3a3;
    color: #404547;
    font: 12px/18px "Noto Sans", "Noto Sans CJK SC", sans-serif;
}
button, input, select {
    font: inherit;
    color: inherit;
    margin: 0;
    padding: 0;
    border: 0;
    border-radius: 0;
    background: none;
}
h3, h4, p, ul {
    margin: 0;
    padding: 0;
    list-style: none;
}
h3, h4 {
    font-size: 12px;
    line-height: 18px;
    font-weight: 500;
    color: #333;
}
svg {
    display: block;
    flex: none;
}
.defs {
    position: absolute;
}
.i8 { width: 8px; height: 8px; }
.i10 { width: 10px; height: 8px; }
.i14 { width: 14px; height: 14px; }
.i16 { width: 16px; height: 16px; }
.i18 { width: 18px; height: 18px; }
.dim { color: #a5a8a8; }
.vsep {
    width: 1px;
    height: 24px;
    background: #a9adae;
}
.window {
    min-height: 100vh;
    display: flex;
    flex-direction: column;
    border: 4px solid #a3a3a3;
    background: #fff;
}

/* 标题栏 */
.titlebar {
    display: grid;
    grid-template-columns: 1fr auto 1fr;
    align-items: center;
    height: 28px;
    background: #dae0df;
}
.quick {
    display: flex;
    align-items: center;
    gap: 8px;
    padding-left: 9px;
}
.quick .vsep {
    margin-left: -4px;
}
.brand {
    width: 50px;
    height: 28px;
    margin-left: -4px;
    font: 19px/25px Lato, sans-serif;
    color: #555b5d;
}
.brand sup {
    font-size: 6px;
    line-height: 1;
}
.tool {
    display: flex;
    align-items: center;
    gap: 6px;
}
.title {
    font-size: 13px;
    white-space: nowrap;
}
.winbtns {
    display: flex;
    justify-content: flex-end;
    gap: 17px;
    padding-right: 12px;
}

/* 选项卡 */
.tabs {
    display: flex;
    height: 29px;
    background: #3b4344;
    color: #fff;
    font-size: 13px;
}
.tabs button {
    padding: 0 24px 0 23px;
}
.tabs .file {
    width: 66px;
    padding: 0;
    background: linear-gradient(#65cf45, #48a033);
}
.tabs .style-tab {
    width: 73px;
    margin-left: 8px;
    padding: 0;
    font-size: 15px;
    font-style: italic;
    color: #dfe6e6;
    background: #6b7a7c;
}
.tabs .current {
    width: 142px;
    margin-left: 1px;
    padding: 0;
    font-size: 15px;
    font-style: italic;
    color: #333;
    background: #f7f9fc;
}
.tab-tools {
    display: flex;
    align-items: center;
    gap: 11px;
    margin-left: auto;
    padding: 0 8px 4px 0;
}
.tab-tools b {
    font-size: 14px;
}

/* 功能区 */
.ribbon {
    display: flex;
    height: 113px;
    background: #f7f9fc;
    border-bottom: 1px solid #a9b5b6;
}
.feature {
    width: 57px;
    padding: 39px 0 0 12px;
    border-right: 1px solid #a9adae;
}
.ribbon-body {
    flex: 1;
    display: flex;
    flex-direction: column;
    padding-left: 1px;
}
.groups {
    flex: 1;
    display: flex;
    padding-top: 3px;
}
.group {
    padding-left: 14px;
    border-right: 1px solid #dcdee0;
}
.g-curve { width: 231px; padding-left: 12px; }
.g-type { width: 200px; }
.g-set { width: 184px; }
.g-sym { width: 144px; }
.g-op { width: 86px; border: 0; }
.collector {
    display: flex;
    align-items: center;
    gap: 5px;
    width: 201px;
    height: 26px;
    margin: 3px 0 0 3px;
    padding-left: 6px;
    border: 1px solid #a9adae;
    background: #eafbdc;
    box-shadow: inset 0 0 0 2px #fff;
    color: #222;
}
.types {
    display: flex;
    gap: 1px;
    margin-top: 3px;
}
.types button {
    display: flex;
    flex-direction: column;
    align-items: center;
    width: 56px;
    height: 60px;
    padding-top: 3px;
    border-top: 3px solid #b0b0b0;
    line-height: 17px;
}
.types .on {
    border: 1px solid #72cdf4;
    border-top-width: 3px;
    background: #d0f0ff;
}
.types button:disabled {
    border-color: #d3d3d3;
}
button:disabled, .off {
    color: #a6a9ab;
}
.line {
    display: flex;
    align-items: center;
    gap: 3px;
    height: 28px;
    margin-top: 2px;
}
.line ~ .line {
    margin-top: 0;
}
.cmd {
    display: flex;
    align-items: center;
    gap: 4px;
    height: 25px;
    padding: 0 3px 0 4px;
}
.pressed {
    border: 1px solid #a9adae;
    background: #dfe0e2;
}
.line input {
    width: 58px;
    height: 26px;
    border: 1px solid #cacdce;
    background: #f9f7fd;
    box-shadow: inset 0 0 0 2px #fff;
}
.pause {
    display: flex;
    align-items: center;
    justify-content: center;
    width: 70px;
    border-right: 1px solid #a9adae;
    border-left: 1px solid #a9adae;
}
.confirm {
    flex: 1;
    display: flex;
    gap: 14px;
    padding: 22px 0 0 20px;
    align-items: flex-start;
}
.confirm button {
    display: flex;
    flex-direction: column;
    align-items: center;
    gap: 7px;
    width: 26px;
}
.subtabs {
    display: flex;
    height: 24px;
    gap: 1px;
}
.subtabs button {
    width: 71px;
    padding-top: 2px;
    background: #dedfe1;
}
.subtabs .narrow {
    width: 59px;
}
.subtabs .active {
    padding: 3px 2px;
    background: #f7f9fc;
}
.active span {
    display: block;
    border: 1px dotted #000;
    line-height: 18px;
}
.blank {
    width: 53px;
    background: #e9eaeb;
}
.rest {
    flex: 1;
    background: #e9eaeb;
}
.help {
    display: flex;
    align-items: center;
    gap: 3px;
    width: 264px;
    padding: 0 3px 0 13px;
    border-left: 1px solid #a9adae;
}
.helpbox {
    flex: 1;
    display: flex;
    flex-direction: column;
    justify-content: space-between;
    align-items: flex-start;
    height: 91px;
    padding: 9px 7px 8px;
    background: #dfe0e2;
}
.helpbox a {
    color: #1469a5;
}

/* 导航区 */
.work {
    position: relative;
    flex: 1;
    display: flex;
}
.side {
    width: 294px;
    background: #f7fafc;
    border-right: 3px solid #dae0df;
}
.side-tabs {
    display: flex;
    height: 26px;
    background: #dae0df;
}
.side-tabs button {
    width: 32px;
    padding-left: 8px;
}
.side-tabs .on {
    background: #f7fafc;
}
.bar {
    display: flex;
    align-items: center;
    gap: 5px;
    height: 32px;
    padding-left: 14px;
}
.tri {
    width: 9px;
    height: 8px;
}
.dots {
    height: 14px;
    border-left: 2px dotted #aaa;
}
.bar-tools {
    display: flex;
    align-items: center;
    gap: 6px;
    margin-left: 19px;
}
.bar-tools .pressed {
    display: grid;
    place-items: center;
    width: 24px;
    height: 24px;
    margin-left: -1px;
}
.bar-tools .vsep {
    margin-right: 2px;
}
.search {
    display: flex;
    align-items: center;
    gap: 4px;
    padding-left: 12px;
    margin-bottom: 5px;
}
.field {
    display: flex;
    align-items: center;
    width: 211px;
    height: 29px;
    padding-right: 5px;
    border: 1px solid #a9b5b6;
    background: #fff;
}
.field input {
    flex: 1;
    min-width: 0;
}
.root {
    display: flex;
    align-items: center;
    gap: 6px;
    height: 22px;
    padding-left: 12px;
}
.tree {
    margin-left: 19px;
    border-left: 1px solid #c3c7c9;
}
.tree li {
    position: relative;
    display: flex;
    align-items: center;
    gap: 5px;
    height: 22px;
    padding-left: 11px;
}
.tree li::before {
    content: "";
    position: absolute;
    left: 0;
    width: 8px;
    border-top: 1px solid #c3c7c9;
}
.tree .exp::before {
    left: -3px;
    width: 0;
    border: 4px solid transparent;
    border-left: 5px solid #666;
    border-right: 0;
}
.end {
    border: 0;
}
.end li::after {
    content: "";
    position: absolute;
    left: 0;
    top: 0;
    height: 22px;
    border-left: 1px solid #c3c7c9;
}
.end li:last-child::after {
    height: 11px;
}
.tree span {
    display: flex;
}
.star {
    margin-top: 2px;
}
.insert {
    height: 2px;
    margin: 6px 0 6px 12px;
    background: #62c544;
}
.tree-panel {
    height: 270px;
}
.layer-panel, .style-panel {
    margin-left: 8px;
    border-top: 2px solid #dae0df;
}
.layer-panel {
    height: 179px;
}
.layer-panel .bar, .style-panel .bar {
    padding-left: 6px;
}
.layer-panel .bar, .style-panel .bar {
    height: 34px;
}
.layer-tools .pressed + .pressed {
    margin-left: -7px;
}
.more {
    margin-left: 13px;
    font-size: 16px;
}
.target {
    display: flex;
    align-items: center;
    height: 24px;
    border: 1px solid #cfd3d4;
    background: #f1f3f4;
    padding-left: 3px;
}
.target input {
    flex: 1;
    height: 22px;
    margin-left: 4px;
    padding-left: 7px;
    border-left: 1px solid #cfd3d4;
    color: #a6a9ab;
}
.layer-box {
    display: flex;
    height: 118px;
    margin-right: 5px;
    overflow: hidden;
}
.layer-list {
    flex: 1;
}
.layer-list .root {
    height: 20px;
    padding-left: 3px;
    gap: 8px;
}
.layer-list .tree {
    margin-left: 11px;
}
.layer-list li {
    height: 20px;
    gap: 9px;
}
.scroll {
    display: flex;
    flex-direction: column;
    width: 15px;
    background: #e0e2e4;
    border: 1px solid #d3d5d6;
}
.thumb {
    height: 73px;
    background: #fafbfc;
    border-bottom: 1px solid #b9bcbe;
}
.scroll button {
    display: grid;
    place-items: center;
    height: 14px;
    margin-top: auto;
    background: #f5f6f7;
}
.style-panel {
    margin-right: 5px;
}
.style-panel .root {
    gap: 5px;
    padding-left: 3px;
}
.style-panel .tree {
    margin-left: 11px;
}

/* 图形区 */
.view {
    position: relative;
    flex: 1;
    display: flex;
    justify-content: center;
    align-items: flex-start;
    padding-top: 7px;
}
.scene {
    position: absolute;
    left: 0;
    top: 0;
    width: 100%;
    height: 100%;
}
.datum {
    font: 14px "Liberation Mono", monospace;
    fill: #996633;
}
.axis {
    font: 12px "Liberation Mono", monospace;
}
.cyan { fill: #2ee6e6; }
.green { fill: #2df52d; }
.red { fill: #f33; }
.viewbar {
    position: relative;
    display: flex;
    gap: 2px;
    padding: 3px;
    border: 1px solid #999da0;
    background: #f7f9fc;
}
.viewbar button {
    display: grid;
    place-items: center;
    width: 24px;
    height: 24px;
}
.drop {
    background: linear-gradient(135deg, transparent 50%, #666 50%) 100% 100% / 3px 3px no-repeat;
}

/* 相切面板 */
.panel {
    position: absolute;
    left: 244px;
    top: 0;
    width: 300px;
    height: 383px;
    padding: 7px 12px;
    border: 1px solid #cfd6d7;
    background: #fbfbfb;
}
.grip {
    width: 18px;
    margin: 0 auto 28px;
    border-top: 2px dotted #aaa;
}
.row {
    display: flex;
    align-items: center;
    height: 25px;
    margin-bottom: 6px;
}
.row label {
    width: 44px;
    padding-left: 10px;
}
.panel h4 {
    margin: 12px 0 9px;
}
.panel .grip + h4 {
    margin: 0 0 8px;
}
.combo {
    position: relative;
    width: 199px;
    height: 25px;
    border: 1px solid #a5a8a8;
    background: #f7f7f7;
    display: flex;
}
.combo.off {
    border-color: #cacccd;
}
.combo select {
    flex: 1;
    appearance: none;
    padding: 0 20px 0 6px;
    opacity: 1;
}
.combo.off select {
    color: #a6a9ab;
}
.combo input {
    flex: 1;
    min-width: 0;
    padding-left: 3px;
    background: #fff;
}
.combo i {
    display: grid;
    place-items: center;
    width: 15px;
    border-left: 1px solid #b5b8b8;
    pointer-events: none;
}
.combo select + i {
    position: absolute;
    right: 0;
    top: 0;
    height: 100%;
}
.brk {
    width: 14px;
    height: 14px;
    margin-left: 12px;
}
.light {
    color: #999;
}
.radios {
    display: flex;
    gap: 14px;
    height: 18px;
    margin: 11px 0 6px 12px;
}
.radios label {
    display: flex;
    align-items: center;
    gap: 7px;
}
.radios input {
    appearance: none;
    width: 12px;
    height: 12px;
    border: 1px solid #555;
    border-radius: 50%;
    background: #fff;
}
.radios input:checked {
    background: radial-gradient(#333 0 2px, #fff 3px);
}
.plane-row {
    height: 24px;
    margin-top: -1px;
}
.plane-row label {
    padding-bottom: 6px;
}
.plane-input {
    width: 199px;
    height: 24px;
    padding-left: 6px;
    border: 1px solid #bfc3c4;
    background: #f3f0fd;
    box-shadow: inset 0 0 0 1px #fff;
}

/* 状态栏 */
.status {
    display: flex;
    align-items: center;
    height: 47px;
    background: #f4f8fa;
    border-top: 1px solid #a9b5b6;
}
.st-left {
    display: flex;
    align-items: center;
    gap: 7px;
    height: 24px;
    margin-top: 13px;
    padding: 0 12px 0 6px;
    border-right: 1px solid #a9adae;
}
.st-left .pressed {
    display: grid;
    place-items: center;
    width: 22px;
    height: 24px;
}
.msgs {
    padding: 4px 0 0 6px;
    line-height: 16px;
}
.msgs li {
    display: flex;
    align-items: center;
    gap: 5px;
}
.msgs li::before {
    content: "";
    width: 5px;
    height: 5px;
    border-radius: 50%;
    background: #13658c;
}
.st-right {
    display: flex;
    align-items: center;
    margin: 12px 3px 0 auto;
}
.find {
    display: flex;
    margin-left: 4px;
    padding: 0 3px 0 2px;
    border-left: 1px solid #a9adae;
    border-right: 1px solid #a9adae;
}
.find button {
    display: grid;
    place-items: center;
    width: 28px;
    height: 24px;
    border: 1px solid #d0d3d4;
}
.find .arrow {
    width: 15px;
    border-left: 0;
}
.sel-count {
    width: 97px;
    padding-left: 3px;
}
.status .combo {
    width: 177px;
    background: #f4f8fa;
}
.sizer {
    margin: 10px 0 0 3px;
}

/* 红色标注 */
.marks {
    position: absolute;
    left: 0;
    top: 0;
    width: 100%;
    height: 100%;
    pointer-events: none;
}
.note {
    position: absolute;
    font: 300 20px/20px "Noto Sans CJK SC", sans-serif;
    color: #f00;
    white-space: nowrap;
}
.note span {
    font: 17px/20px "Liberation Mono", monospace;
    vertical-align: top;
}
.n1 { left: 525px; top: 243px; }
.n2 { left: 534px; top: 382px; }
.n3 { left: 1007px; top: 477px; }

/* 网速浮窗 */
.netmon {
    position: absolute;
    right: 0;
    top: 857px;
    width: 32px;
    height: 141px;
    display: flex;
    flex-direction: column;
    align-items: center;
    padding-top: 10px;
    border-radius: 10px 0 0 10px;
    background: rgba(165, 168, 173, .85);
    box-shadow: 0 0 6px rgba(0, 0, 0, .25);
    color: #fff;
    font-size: 10px;
    line-height: 12px;
}
.led {
    width: 11px;
    height: 11px;
    border-radius: 50%;
    background: #07c160;
}
.gauge {
    width: 10px;
    height: 30px;
    margin: 18px 0 16px;
    border-radius: 5px;
    background: linear-gradient(#c3c5c8 62%, #8fcc4e 62%, #3cc7a6);
}
.speed {
    margin-bottom: 3px;
    text-align: center;
}
.speed small {
    display: flex;
    align-items: center;
    gap: 2px;
    font-size: 9px;
    color: #dfe0e2;
}

/* 水印 */
.watermark {
    position: absolute;
    right: 18px;
    bottom: 7px;
    width: 165px;
}
.wm-name {
    font: italic 400 38px/44px "Noto Sans CJK SC", sans-serif;
    color: #000;
    white-space: nowrap;
}
.wm-name span {
    margin-right: 9px;
    color: #ff6633;
}
.flame {
    position: absolute;
    left: 62px;
    top: -14px;
}
.wm-url {
    font: italic 16px/18px Inter, sans-serif;
    color: #9a9da0;
}
```
